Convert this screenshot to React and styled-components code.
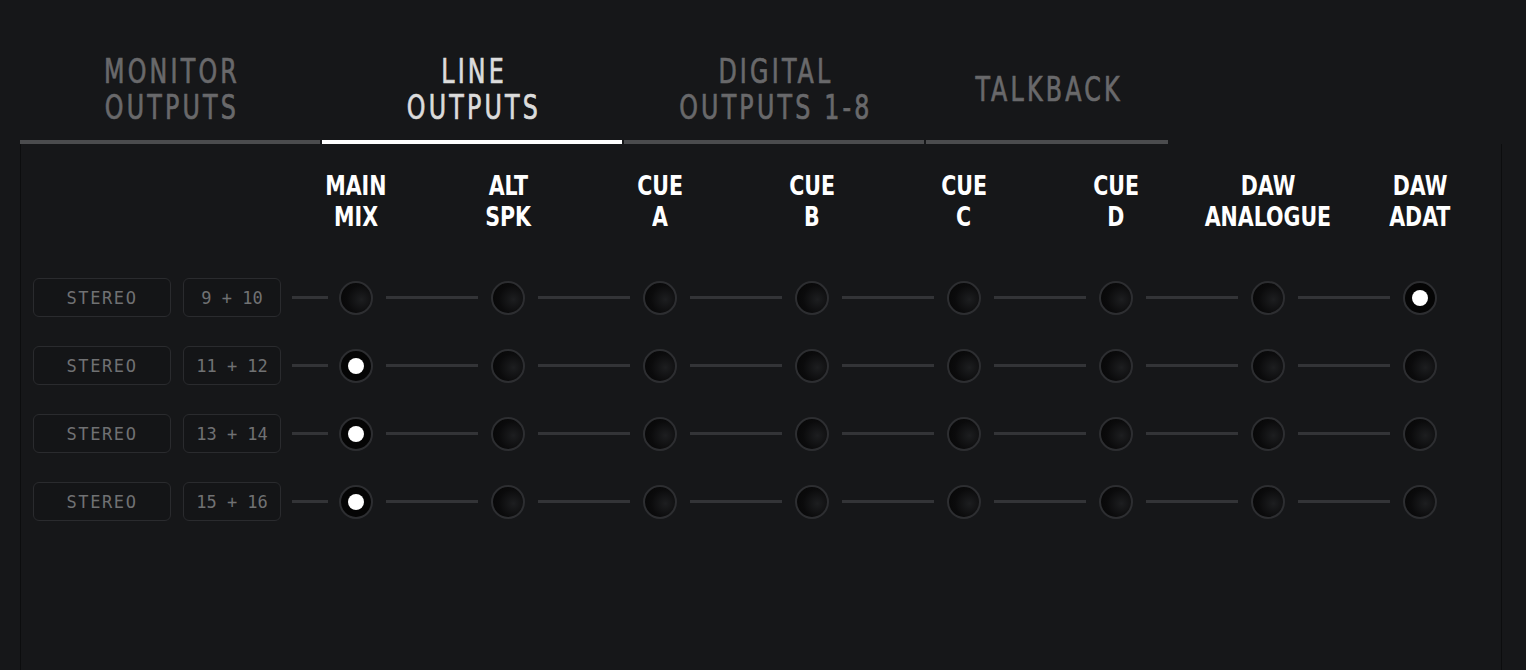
import React from "react";
import styled, { createGlobalStyle } from "styled-components";

const GlobalStyle = createGlobalStyle`
  html, body {
    margin: 0;
    padding: 0;
    background: #161719;
    overflow: hidden;
  }
`;

// no real condensed DIN available, so the condensed DejaVu cut gets squeezed a bit more
const NARROW = `"DejaVu Sans Condensed", "DejaVu Sans", sans-serif`;
const MONO = `"DejaVu Sans Mono", "Liberation Mono", monospace`;

const tabs = [
  { lines: ["MONITOR", "OUTPUTS"], width: 300 },
  { lines: ["LINE", "OUTPUTS"], width: 300, active: true },
  { lines: ["DIGITAL", "OUTPUTS 1-8"], width: 300 },
  { lines: ["TALKBACK"], width: 242 },
];

const columns = [
  ["MAIN", "MIX"],
  ["ALT", "SPK"],
  ["CUE", "A"],
  ["CUE", "B"],
  ["CUE", "C"],
  ["CUE", "D"],
  ["DAW", "ANALOGUE"],
  ["DAW", "ADAT"],
];

const rows = [
  { mode: "STEREO", channels: "9 + 10", selected: 7 },
  { mode: "STEREO", channels: "11 + 12", selected: 0 },
  { mode: "STEREO", channels: "13 + 14", selected: 0 },
  { mode: "STEREO", channels: "15 + 16", selected: 0 },
];

export default function App() {
  return (
    <Page>
      <GlobalStyle />
      <TabBar>
        {tabs.map((tab) => (
          <Tab key={tab.lines.join(" ")} $width={tab.width} $active={tab.active}>
            {tab.lines.map((line) => (
              <TabLine key={line}>{line}</TabLine>
            ))}
          </Tab>
        ))}
      </TabBar>
      <Panel>
        <HeaderRow>
          {columns.map(([top, bottom]) => (
            <HeaderCell key={top + bottom}>
              <span>{top}</span>
              <span>{bottom}</span>
            </HeaderCell>
          ))}
        </HeaderRow>
        <Rows>
          {rows.map((row) => (
            <Row key={row.channels}>
              <ModeBox>{row.mode}</ModeBox>
              <ChannelBox>{row.channels}</ChannelBox>
              {columns.map(([top, bottom], i) => (
                <React.Fragment key={top + bottom}>
                  <Connector $lead={i === 0} />
                  <Radio $on={row.selected === i} />
                </React.Fragment>
              ))}
            </Row>
          ))}
        </Rows>
      </Panel>
    </Page>
  );
}

const Page = styled.div`
  height: 100vh;
  box-sizing: border-box;
  padding: 40px 0 0 20px;
  display: flex;
  flex-direction: column;
  background: #161719;
`;

const TabBar = styled.div`
  display: flex;
  gap: 2px;
`;

const Tab = styled.div`
  width: ${({ $width }) => $width}px;
  height: 100px;
  border-bottom: 4px solid ${({ $active }) => ($active ? "#ffffff" : "#4b4c4e")};
  display: flex;
  flex-direction: column;
  align-items: center;
  justify-content: center;
  font-family: ${NARROW};
  font-size: 33px;
  line-height: 36px;
  letter-spacing: 4px;
  -webkit-text-stroke: 0.7px currentColor;
  color: ${({ $active }) => ($active ? "#dcdcdc" : "#69696b")};
  cursor: pointer;
`;

const TabLine = styled.span`
  display: block;
  margin-right: -4px;
  white-space: nowrap;
  transform: scaleX(0.8);
`;

const Panel = styled.div`
  flex: 1;
  width: 1482px;
  box-sizing: border-box;
  border-left: 1px solid #0c0d0e;
  border-right: 1px solid #0c0d0e;
  padding: 27px 0 0 12px;
`;

const HeaderRow = styled.div`
  display: flex;
  padding-left: 247px;
`;

const HeaderCell = styled.div`
  width: 152px;
  display: flex;
  flex-direction: column;
  align-items: center;
  font-family: ${NARROW};
  font-weight: 700;
  font-size: 26px;
  line-height: 30.5px;
  color: #ffffff;

  span {
    display: block;
    white-space: nowrap;
    transform: scaleX(0.88);
  }
`;

const Rows = styled.div`
  display: flex;
  flex-direction: column;
  gap: 29px;
  margin-top: 46px;
`;

const Row = styled.div`
  display: flex;
  align-items: center;
  height: 39px;
`;

const LabelBox = styled.div`
  height: 39px;
  box-sizing: border-box;
  border: 1px solid #2a2b2e;
  border-radius: 6px;
  background: #141517;
  display: flex;
  align-items: center;
  justify-content: center;
  font-family: ${MONO};
  font-size: 17px;
  color: #707173;
`;

const ModeBox = styled(LabelBox)`
  width: 138px;
  letter-spacing: 1.6px;
`;

const ChannelBox = styled(LabelBox)`
  width: 98px;
  margin-left: 12px;
`;

const Connector = styled.div`
  width: ${({ $lead }) => ($lead ? 36 : 92)}px;
  height: 3px;
  margin: 0 ${({ $lead }) => ($lead ? 11 : 13)}px;
  background: #333437;
`;

const Radio = styled.div`
  width: 34px;
  height: 34px;
  box-sizing: border-box;
  border-radius: 50%;
  border: 2px solid #2d2e31;
  background: ${({ $on }) =>
    $on
      ? "#050505"
      : "radial-gradient(circle at 68% 55%, #1d1e20 0%, #0b0b0c 55%, #050505 100%)"};
  display: flex;
  align-items: center;
  justify-content: center;
  flex-shrink: 0;

  &::after {
    content: "";
    display: ${({ $on }) => ($on ? "block" : "none")};
    width: 16px;
    height: 16px;
    border-radius: 50%;
    background: #ffffff;
  }
`;
